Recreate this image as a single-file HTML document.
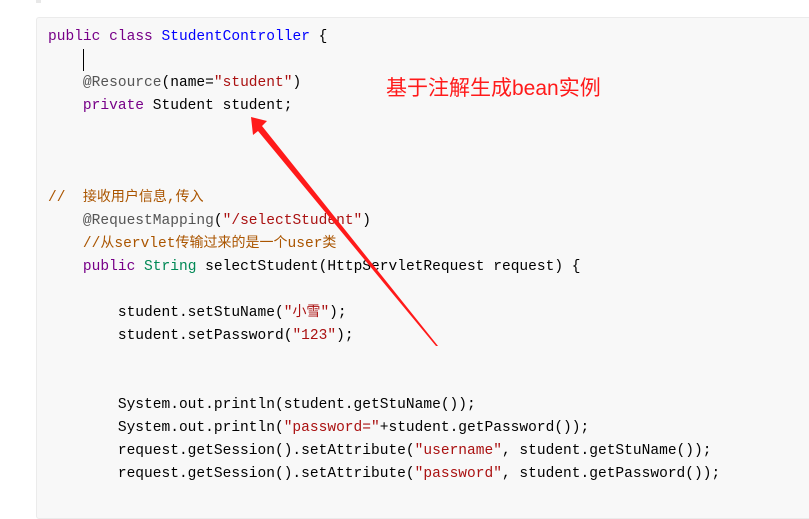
<!DOCTYPE html>
<html><head><meta charset="utf-8"><style>
html,body{margin:0;padding:0;width:809px;height:476px;overflow:hidden;background:#fff;}
.tab{position:absolute;left:36px;top:0;width:5px;height:3px;background:#e8e8e8;}
.box{position:absolute;left:36px;top:17px;width:800px;height:500px;background:#f8f8f8;border:1px solid #ebebeb;border-radius:3px;}
pre{position:absolute;left:48px;top:26px;margin:0;font-family:"Liberation Mono","Noto Sans CJK SC",monospace;font-size:14.55px;line-height:23px;color:#000;}
.k{color:#770088}.d{color:#0000ff}.s{color:#aa1111}.a{color:#555}.c{color:#aa5500}.t{color:#008855}
.z{font-size:14px;}
.cur{position:absolute;left:83px;top:49px;width:1px;height:22px;background:#000;}
.note{position:absolute;left:386px;top:72px;font-family:"Liberation Sans","Noto Sans CJK SC",sans-serif;font-size:21px;color:#ff1a1a;}
svg{position:absolute;left:0;top:0;}
</style></head><body>
<div class="tab"></div>
<div class="box"></div>
<pre><span class="k">public</span> <span class="k">class</span> <span class="d">StudentController</span> {

    <span class="a">@Resource</span>(name=<span class="s">"student"</span>)
    <span class="k">private</span> Student student;



<span class="c">//  <span class="z">接收用户信息</span>,<span class="z">传入</span></span>
    <span class="a">@RequestMapping</span>(<span class="s">"/selectStudent"</span>)
    <span class="c">//<span class="z">从</span>servlet<span class="z">传输过来的是一个</span>user<span class="z">类</span></span>
    <span class="k">public</span> <span class="t">String</span> selectStudent(HttpServletRequest request) {

        student.setStuName(<span class="s">"<span class="z">小雪</span>"</span>);
        student.setPassword(<span class="s">"123"</span>);


        System.out.println(student.getStuName());
        System.out.println(<span class="s">"password="</span>+student.getPassword());
        request.getSession().setAttribute(<span class="s">"username"</span>, student.getStuName());
        request.getSession().setAttribute(<span class="s">"password"</span>, student.getPassword());
</pre>
<div class="cur"></div>
<div class="note">基于注解生成bean实例</div>
<svg width="809" height="476"><polygon points="251,117 267,121 262,126 438,346 436,346 258,131 253,135" fill="#ff1a1a"/></svg>
</body></html>
